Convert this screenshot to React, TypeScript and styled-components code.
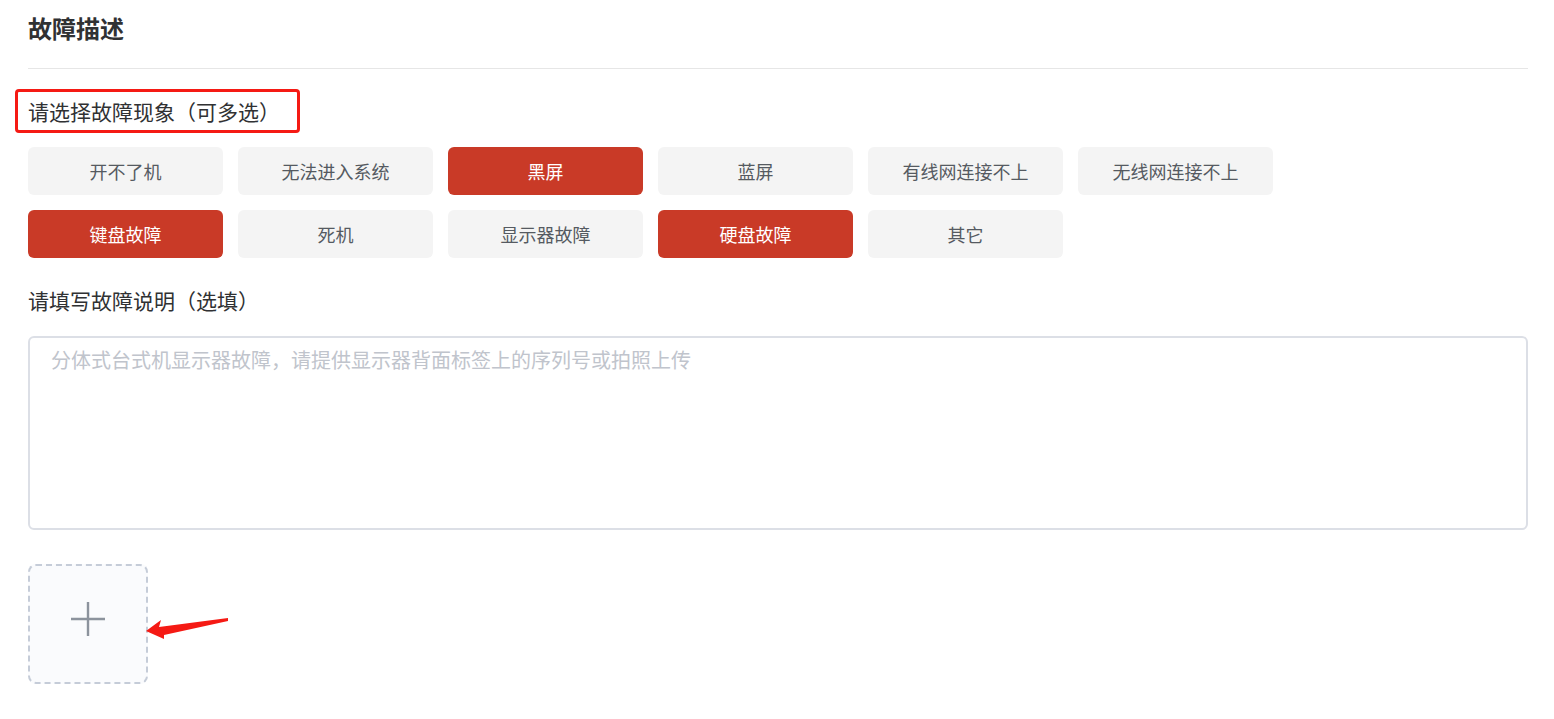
import React from 'react';
import styled, { createGlobalStyle } from 'styled-components';

// Global reset
const GlobalStyle = createGlobalStyle`
  body {
    margin: 0;
    background: #ffffff;
    font-family: "Microsoft YaHei", "Noto Sans CJK SC", "Liberation Sans", sans-serif;
  }
`;

const symptoms = [
  { label: '开不了机', active: false },
  { label: '无法进入系统', active: false },
  { label: '黑屏', active: true },
  { label: '蓝屏', active: false },
  { label: '有线网连接不上', active: false },
  { label: '无线网连接不上', active: false },
  { label: '键盘故障', active: true },
  { label: '死机', active: false },
  { label: '显示器故障', active: false },
  { label: '硬盘故障', active: true },
  { label: '其它', active: false },
];

const Page = styled.div`
  padding: 11px 26px 30px 28px;
  width: 1500px;
`;

const Title = styled.h2`
  margin: 0;
  font-size: 24px;
  line-height: 34px;
  font-weight: 700;
  color: #303133;
  padding-bottom: 23px;
  border-bottom: 1px solid #e6e6e6;
`;

const FieldLabel = styled.div<{ $highlight?: boolean }>`
  display: inline-block;
  position: relative;
  font-size: 21px;
  line-height: 28px;
  color: #303133;
  margin: 28px 0 22px;

  ${(p) =>
    p.$highlight &&
    `
    &::after {
      content: '';
      position: absolute;
      left: -13px;
      right: -20px;
      top: -8px;
      bottom: -8px;
      border: 3px solid #f51a14;
      border-radius: 4px;
    }
  `}
`;

const TagGrid = styled.div`
  display: grid;
  grid-template-columns: repeat(6, 195px);
  column-gap: 15px;
  row-gap: 15px;
`;

const Tag = styled.button<{ $active: boolean }>`
  height: 48px;
  border: none;
  border-radius: 6px;
  font-family: inherit;
  font-size: 18px;
  background: ${(p) => (p.$active ? '#c93a27' : '#f4f4f4')};
  color: ${(p) => (p.$active ? '#ffffff' : '#555a61')};
  cursor: pointer;
`;

const TextArea = styled.textarea`
  display: block;
  width: 100%;
  height: 194px;
  box-sizing: border-box;
  border: 2px solid #dcdfe6;
  border-radius: 6px;
  padding: 8px 21px;
  font-family: inherit;
  font-size: 20px;
  line-height: 28px;
  color: #303133;
  resize: none;
  outline: none;

  &::placeholder {
    color: #c0c4cc;
  }
`;

const UploadRow = styled.div`
  position: relative;
  margin-top: 34px;
  height: 120px;
`;

const UploadBox = styled.div`
  width: 120px;
  height: 120px;
  box-sizing: border-box;
  border: 2px dashed #c5ccd8;
  border-radius: 8px;
  background: #fafbfd;
  display: flex;
  align-items: center;
  justify-content: center;
  padding-bottom: 10px;
  cursor: pointer;
`;

// Annotation arrow lying over the page
const Arrow = styled.svg`
  position: absolute;
  left: 112px;
  top: 41px;
`;

const App: React.FC = () => {
  return (
    <Page>
      <GlobalStyle />
      <Title>故障描述</Title>
      <FieldLabel $highlight>请选择故障现象（可多选）</FieldLabel>
      <TagGrid>
        {symptoms.map((s) => (
          <Tag key={s.label} $active={s.active}>
            {s.label}
          </Tag>
        ))}
      </TagGrid>
      <FieldLabel>请填写故障说明（选填）</FieldLabel>
      <TextArea placeholder="分体式台式机显示器故障，请提供显示器背面标签上的序列号或拍照上传" />
      <UploadRow>
        <UploadBox>
          <svg width="36" height="36" viewBox="0 0 36 36">
            <path d="M18 1v34M1 18h34" stroke="#8c939d" strokeWidth="2.4" fill="none" />
          </svg>
        </UploadBox>
        <Arrow width="100" height="40" viewBox="0 0 100 40">
          <path d="M6 26 L21 15 L19 22 L88 13 L88 16 L24 30 L24 34 Z" fill="#f51a14" />
        </Arrow>
      </UploadRow>
    </Page>
  );
};

export default App;
